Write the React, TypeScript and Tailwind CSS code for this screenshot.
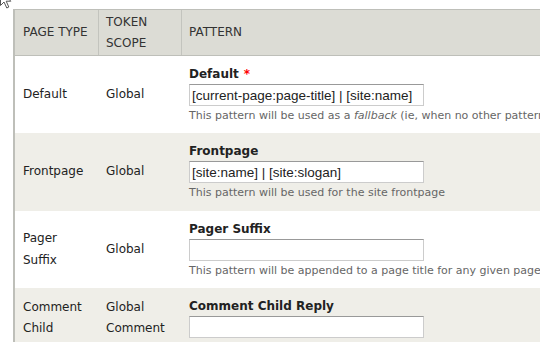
import React from 'react';

interface PatternRow {
  pageType: string[];
  scope: string[];
  label: string;
  required?: boolean;
  value: string;
  description: React.ReactNode;
  height: string;
}

const rows: PatternRow[] = [
  {
    pageType: ['Default'],
    scope: ['Global'],
    label: 'Default',
    required: true,
    value: '[current-page:page-title] | [site:name]',
    description: (
      <>
        This pattern will be used as a <em>fallback</em> (ie, when no other pattern is defined)
      </>
    ),
    height: 'h-[77px]',
  },
  {
    pageType: ['Frontpage'],
    scope: ['Global'],
    label: 'Frontpage',
    value: '[site:name] | [site:slogan]',
    description: 'This pattern will be used for the site frontpage',
    height: 'h-[78px]',
  },
  {
    pageType: ['Pager', 'Suffix'],
    scope: ['Global'],
    label: 'Pager Suffix',
    value: '',
    description: 'This pattern will be appended to a page title for any given page with a pager on it',
    height: 'h-[77px]',
  },
  {
    pageType: ['Comment', 'Child', 'Reply'],
    scope: ['Global', 'Comment', 'Node'],
    label: 'Comment Child Reply',
    value: '',
    description: 'This pattern will be used for comment child reply pages',
    height: 'h-[82px]',
  },
];

function Cursor() {
  return (
    <svg className="absolute left-0 top-[-10px]" width="12" height="19" viewBox="0 0 12 19">
      <path d="M0.5 0.5 L0.5 15.5 L4 12 L6.8 18 L8.8 17 L6.2 11.2 L10.8 11.2 Z" fill="#fff" stroke="#555" strokeWidth="1" />
    </svg>
  );
}

function Lines({ items }: { items: string[] }) {
  return (
    <span>
      {items.map((t, j) => (
        <React.Fragment key={t}>
          {j > 0 && <br />}
          {t}
        </React.Fragment>
      ))}
    </span>
  );
}

export default function App() {
  return (
    <div className="relative w-[540px] h-[342px] overflow-hidden bg-white text-[12px] text-[#222] font-['DejaVu_Sans',sans-serif]">
      <Cursor />
      <div className="ml-[13px] mt-[9px] w-[720px] border-l-2 border-t border-[#bebfb9]">
        {/* header */}
        <div className="grid grid-cols-[84px_83px_1fr] h-[46px] bg-[#dcdcd5] border-b border-[#bebfb9] leading-[21px] uppercase text-[#333]">
          <div className="flex items-center pl-2 border-r border-[#c3c4be]">Page type</div>
          <div className="flex items-center pl-[7px] border-r border-[#c3c4be]">
            <span>Token<br />Scope</span>
          </div>
          <div className="flex items-center pl-[7px]">Pattern</div>
        </div>

        {rows.map((row, i) => (
          <div
            key={row.label}
            className={`grid grid-cols-[84px_83px_1fr] ${row.height} ${i % 2 === 1 ? 'bg-[#efeee8]' : 'bg-white'}`}
          >
            <div className="flex items-center pl-2 leading-[21.5px]">
              <Lines items={row.pageType} />
            </div>
            <div className="flex items-center pl-[7px] leading-[21.5px]">
              <Lines items={row.scope} />
            </div>
            <div className="pl-[7px] pt-[9px]">
              <div className="font-bold leading-[18px]">
                {row.label}
                {row.required && <span className="ml-[5px] text-[#f00]">*</span>}
              </div>
              <input
                type="text"
                readOnly
                value={row.value}
                className="mt-px block h-[22px] w-[235px] border border-[#ccc] border-t-[#999] bg-white px-[2px] text-[13.5px] leading-[20px] text-[#222] font-['Liberation_Sans',Arial,sans-serif] outline-none"
              />
              <div className="mt-[2px] whitespace-nowrap text-[11px] leading-[16px] text-[#666]">
                {row.description}
              </div>
            </div>
          </div>
        ))}
      </div>
    </div>
  );
}
